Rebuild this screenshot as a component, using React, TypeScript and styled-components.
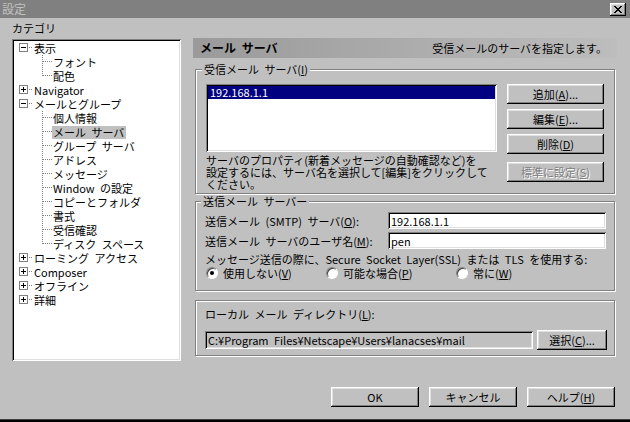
import React from 'react';
import styled, { createGlobalStyle, css } from 'styled-components';

const GlobalStyle = createGlobalStyle`
  html, body {
    margin: 0;
    padding: 0;
    background: #c0c0c0;
  }
  body {
    font-family: "Noto Sans CJK JP", "Noto Sans", sans-serif;
  }
`;

const raised = css`
  box-shadow: inset -1px -1px #000, inset 1px 1px #fff, inset -2px -2px #808080, inset 2px 2px #dfdfdf;
`;

const sunken = css`
  box-shadow: inset 1px 1px #808080, inset -1px -1px #fff, inset 2px 2px #000, inset -2px -2px #dfdfdf;
`;

const Window = styled.div`
  width: 630px;
  height: 422px;
  box-sizing: border-box;
  background: #c0c0c0;
  display: flex;
  flex-direction: column;
  overflow: hidden;
  font-family: "Noto Sans CJK JP", "Noto Sans", sans-serif;
  font-size: 11px;
  word-spacing: 3px;
  color: #000;
  border-bottom: 2px solid #000;
  box-shadow: inset 0 -1px #404040;
`;

const TitleBar = styled.div`
  height: 18px;
  flex: none;
  background: #808080;
  color: #c0c0c0;
  font-size: 12px;
  display: flex;
  align-items: center;
  justify-content: space-between;
  padding: 0 4px 0 2px;
  line-height: 14px;
`;

const CloseButton = styled.div`
  width: 16px;
  height: 13px;
  background: #c0c0c0;
  ${raised};
  display: flex;
  align-items: center;
  justify-content: center;
`;

const Main = styled.div`
  display: flex;
  align-items: flex-start;
  gap: 12px;
  padding-left: 12px;
`;

const LeftColumn = styled.div`
  width: 169px;
  padding-top: 4px;
`;

const Caption = styled.div`
  line-height: 12px;
  margin-bottom: 5px;
`;

const Tree = styled.div`
  height: 322px;
  box-sizing: border-box;
  background: #fff;
  ${sunken};
  padding: 2px 2px 0 2px;
`;

const TreeRow = styled.div<{ $level: number }>`
  height: 14px;
  display: flex;
  align-items: center;
  padding-left: ${p => p.$level * 19}px;
  white-space: nowrap;
`;

const TreeLabel = styled.span<{ $selected?: boolean }>`
  line-height: 13px;
  padding: 0 2px 0 1px;
  background: ${p => (p.$selected ? '#c0c0c0' : 'transparent')};
`;

const RightPanel = styled.div`
  width: 424px;
  padding-top: 20px;
  display: flex;
  flex-direction: column;
`;

const PageHeader = styled.div`
  height: 20px;
  display: flex;
  align-items: center;
  justify-content: space-between;
  padding: 0 10px 0 7px;
  background: linear-gradient(to right, #9a9a9a, #bdbdbd);
  line-height: 12px;
`;

const PageTitle = styled.span`
  font-weight: bold;
  font-size: 12px;
`;

const Group = styled.fieldset<{ $mt: number; $pad: string }>`
  margin: ${p => p.$mt}px 2px 0 2px;
  padding: ${p => p.$pad};
  min-width: 0;
  border: 1px solid #808080;
  box-shadow: inset 1px 1px #fff, 1px 1px #fff;
`;

const Legend = styled.legend`
  margin-left: -4px;
  padding: 0 2px;
  line-height: 12px;
  background: #c0c0c0;
`;

const ServerArea = styled.div`
  display: flex;
  gap: 10px;
`;

const ServerLeft = styled.div`
  width: 291px;
`;

const ListBox = styled.div`
  height: 68px;
  background: #fff;
  ${sunken};
  padding: 2px;
  box-sizing: border-box;
`;

const ListItem = styled.div<{ $selected?: boolean }>`
  height: 13px;
  line-height: 13px;
  padding-left: 2px;
  background: ${p => (p.$selected ? '#000080' : 'transparent')};
  color: ${p => (p.$selected ? '#fff' : '#000')};
`;

const HelpText = styled.div`
  margin-top: 2px;
  line-height: 12px;
  white-space: nowrap;
`;

const ButtonColumn = styled.div`
  display: flex;
  flex-direction: column;
`;

const Button = styled.button<{ $w: number; $mt?: number }>`
  width: ${p => p.$w}px;
  height: 20px;
  margin-top: ${p => p.$mt ?? 0}px;
  border: none;
  padding: 0;
  background: #c0c0c0;
  ${raised};
  font: inherit;
  word-spacing: inherit;
  color: #000;
  line-height: 12px;
  &:disabled {
    color: #808080;
    text-shadow: 1px 1px #fff;
  }
`;

const FormGrid = styled.div`
  display: grid;
  grid-template-columns: 183px 218px;
  row-gap: 3px;
  align-items: center;
`;

const Label = styled.span`
  line-height: 12px;
  white-space: nowrap;
`;

const Field = styled.input<{ $h: number; $disabled?: boolean }>`
  height: ${p => p.$h}px;
  box-sizing: border-box;
  border: none;
  outline: none;
  padding: 0 3px;
  margin: 0;
  width: 100%;
  background: ${p => (p.$disabled ? '#c0c0c0' : '#fff')};
  ${sunken};
  font: inherit;
  word-spacing: inherit;
  color: #000;
`;

const SslText = styled.div`
  margin-top: 4px;
  line-height: 12px;
  white-space: nowrap;
`;

const RadioRow = styled.div`
  margin-top: 2px;
  padding-left: 1px;
  display: grid;
  grid-template-columns: 120px 130px auto;
  height: 12px;
`;

const RadioItem = styled.label`
  display: flex;
  align-items: center;
  gap: 5px;
  line-height: 12px;
  white-space: nowrap;
`;

const RadioCircle = styled.span<{ $checked?: boolean }>`
  width: 12px;
  height: 12px;
  flex: none;
  box-sizing: border-box;
  border-radius: 50%;
  background: #fff;
  border: 1px solid;
  border-color: #808080 #fff #fff #808080;
  box-shadow: inset 1px 1px #404040;
  display: flex;
  align-items: center;
  justify-content: center;
  &::after {
    content: '';
    width: 4px;
    height: 4px;
    border-radius: 50%;
    background: ${p => (p.$checked ? '#000' : 'transparent')};
  }
`;

const DirRow = styled.div`
  margin-top: 8px;
  display: flex;
  align-items: center;
  gap: 4px;
`;

const DirField = styled.div`
  width: 328px;
`;

const Footer = styled.div`
  display: flex;
  justify-content: flex-end;
  gap: 10px;
  padding: 26px 15px 0 0;
`;

type Node = { label: string; level: number; exp?: '+' | '-'; last?: boolean; selected?: boolean };

const tree: Node[] = [
  { label: '表示', level: 0, exp: '-' },
  { label: 'フォント', level: 1 },
  { label: '配色', level: 1, last: true },
  { label: 'Navigator', level: 0, exp: '+' },
  { label: 'メールとグループ', level: 0, exp: '-' },
  { label: '個人情報', level: 1 },
  { label: 'メール サーバ', level: 1, selected: true },
  { label: 'グループ サーバ', level: 1 },
  { label: 'アドレス', level: 1 },
  { label: 'メッセージ', level: 1 },
  { label: 'Window の設定', level: 1 },
  { label: 'コピーとフォルダ', level: 1 },
  { label: '書式', level: 1 },
  { label: '受信確認', level: 1 },
  { label: 'ディスク スペース', level: 1, last: true },
  { label: 'ローミング アクセス', level: 0, exp: '+' },
  { label: 'Composer', level: 0, exp: '+' },
  { label: 'オフライン', level: 0, exp: '+' },
  { label: '詳細', level: 0, exp: '+' },
];

function Gutter({ node }: { node: Node }) {
  const dot = { stroke: '#808080', strokeDasharray: '1 1', shapeRendering: 'crispEdges' as const };
  return (
    <svg width="19" height="14" viewBox="0 0 19 14" style={{ flex: 'none' }}>
      {node.exp ? (
        <>
          <rect x="5.5" y="2.5" width="8" height="8" fill="#fff" stroke="#808080" shapeRendering="crispEdges" />
          <line x1="7" y1="6.5" x2="12" y2="6.5" stroke="#000" shapeRendering="crispEdges" />
          {node.exp === '+' && <line x1="9.5" y1="4" x2="9.5" y2="9" stroke="#000" shapeRendering="crispEdges" />}
          <line x1="15" y1="6.5" x2="19" y2="6.5" {...dot} />
        </>
      ) : (
        <>
          <line x1="9.5" y1="0" x2="9.5" y2={node.last ? 7 : 14} {...dot} />
          <line x1="10" y1="6.5" x2="19" y2="6.5" {...dot} />
        </>
      )}
    </svg>
  );
}

function CloseGlyph() {
  return (
    <svg width="8" height="7" viewBox="0 0 8 7" shapeRendering="crispEdges">
      <path
        d="M0 0h2v1H0zM6 0h2v1H6zM1 1h2v1H1zM5 1h2v1H5zM2 2h4v1H2zM3 3h2v1H3zM2 4h4v1H2zM1 5h2v1H1zM5 5h2v1H5zM0 6h2v1H0zM6 6h2v1H6z"
        fill="#000"
      />
    </svg>
  );
}

export default function App() {
  return (
    <>
      <GlobalStyle />
      <Window>
        <TitleBar>
          <span>設定</span>
          <CloseButton>
            <CloseGlyph />
          </CloseButton>
        </TitleBar>
        <Main>
          <LeftColumn>
            <Caption>カテゴリ</Caption>
            <Tree>
              {tree.map(n => (
                <TreeRow key={n.label} $level={n.level}>
                  <Gutter node={n} />
                  <TreeLabel $selected={n.selected}>{n.label}</TreeLabel>
                </TreeRow>
              ))}
            </Tree>
          </LeftColumn>
          <RightPanel>
            <PageHeader>
              <PageTitle>メール サーバ</PageTitle>
              <span>受信メールのサーバを指定します。</span>
            </PageHeader>

            <Group $mt={5} $pad="9px 10px 3px 10px">
              <Legend>
                受信メール サーバ(<u>I</u>)
              </Legend>
              <ServerArea>
                <ServerLeft>
                  <ListBox>
                    <ListItem $selected>192.168.1.1</ListItem>
                  </ListBox>
                  <HelpText>
                    サーバのプロパティ(新着メッセージの自動確認など)を
                    <br />
                    設定するには、サーバ名を選択して[編集]をクリックして
                    <br />
                    ください。
                  </HelpText>
                </ServerLeft>
                <ButtonColumn>
                  <Button $w={97}>
                    追加(<u>A</u>)...
                  </Button>
                  <Button $w={97} $mt={5}>
                    編集(<u>E</u>)...
                  </Button>
                  <Button $w={97} $mt={5}>
                    削除(<u>D</u>)
                  </Button>
                  <Button $w={97} $mt={8} disabled>
                    標準に設定(<u>S</u>)
                  </Button>
                </ButtonColumn>
              </ServerArea>
            </Group>

            <Group $mt={1} $pad="5px 8px 11px 9px">
              <Legend>送信メール サーバー</Legend>
              <FormGrid>
                <Label>
                  送信メール (SMTP) サーバ(<u>O</u>):
                </Label>
                <Field $h={17} defaultValue="192.168.1.1" />
                <Label>
                  送信メール サーバのユーザ名(<u>M</u>):
                </Label>
                <Field $h={17} defaultValue="pen" />
              </FormGrid>
              <SslText>メッセージ送信の際に、Secure Socket Layer(SSL) または TLS を使用する:</SslText>
              <RadioRow>
                <RadioItem>
                  <RadioCircle $checked />
                  <span>
                    使用しない(<u>V</u>)
                  </span>
                </RadioItem>
                <RadioItem>
                  <RadioCircle />
                  <span>
                    可能な場合(<u>P</u>)
                  </span>
                </RadioItem>
                <RadioItem>
                  <RadioCircle />
                  <span>
                    常に(<u>W</u>)
                  </span>
                </RadioItem>
              </RadioRow>
            </Group>

            <Group $mt={9} $pad="5px 7px 5px 9px">
              <Label>
                ローカル メール ディレクトリ(<u>L</u>):
              </Label>
              <DirRow>
                <DirField>
                  <Field $h={18} $disabled readOnly defaultValue="C:¥Program Files¥Netscape¥Users¥lanacses¥mail" />
                </DirField>
                <Button $w={70}>
                  選択(<u>C</u>)...
                </Button>
              </DirRow>
            </Group>
          </RightPanel>
        </Main>
        <Footer>
          <Button $w={88}>OK</Button>
          <Button $w={88}>キャンセル</Button>
          <Button $w={88}>
            ヘルプ(<u>H</u>)
          </Button>
        </Footer>
      </Window>
    </>
  );
}
